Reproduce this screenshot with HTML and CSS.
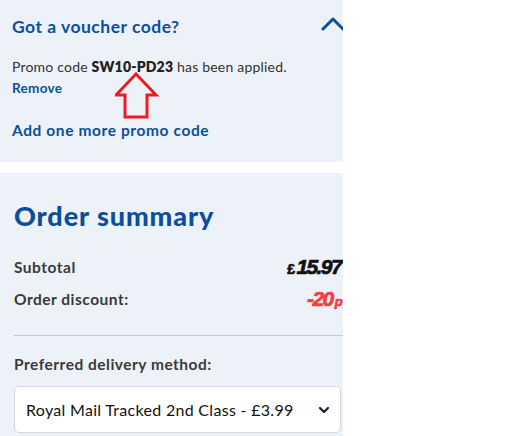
FILE: index.html
```html
<!DOCTYPE html>
<html lang="en">
<head>
<meta charset="UTF-8" />
<meta name="viewport" content="width=device-width, initial-scale=1" />
<title>Basket</title>
<link rel="stylesheet" href="styles.css">
</head>
<body>

<div class="sidebar">
  <div class="panel voucher">
    <div class="voucher-head">
      <h2>Got a voucher code?</h2>
      <svg class="chev-up" width="24" height="14" viewBox="0 0 24 14">
        <polyline points="2,12 12,2 22,12" fill="none" stroke="#0b4f9c" stroke-width="3" stroke-linecap="round" stroke-linejoin="round" />
      </svg>
    </div>
    <p class="applied">Promo code <b>SW10-PD23</b> has been applied.</p>
    <a class="remove" href="#">Remove</a>
    <a class="add-more" href="#">Add one more promo code</a>

    <svg class="pointer" width="48" height="50" viewBox="0 0 48 50">
      <polygon points="21,2 41,23 32,23 32,45 10,45 10,23 1,23" fill="none" stroke="#ed1c24" stroke-width="3" stroke-linejoin="miter" />
    </svg>
  </div>

  <div class="panel summary">
    <h1>Order summary</h1>
    <div class="row">
      <span class="label">Subtotal</span>
      <span class="price"><small>£</small>15.97</span>
    </div>
    <div class="row">
      <span class="label">Order discount:</span>
      <span class="price discount">-20<small>p</small></span>
    </div>
    <hr />
    <div class="label delivery-label">Preferred delivery method:</div>
    <div class="select">
      <span>Royal Mail Tracked 2nd Class - £3.99</span>
      <svg width="12" height="8" viewBox="0 0 12 8">
        <polyline points="2,2 6,6 10,2" fill="none" stroke="#14213d" stroke-width="2.2" stroke-linecap="round" stroke-linejoin="round" />
      </svg>
    </div>
  </div>
</div>

</body>
</html>
```

FILE: styles.css
```css
body {
  margin: 0;
  background: #fff;
  font-family: Lato, "Noto Sans", sans-serif;
  color: #333;
}
.sidebar {
  width: 343px;
}
.panel {
  background: #edf2f9;
  overflow: hidden;
}
.voucher {
  position: relative;
  height: 162px;
  padding: 0 0 0 12px;
  box-sizing: border-box;
}
.voucher-head {
  display: flex;
  justify-content: space-between;
  align-items: center;
  height: 52px;
  margin-right: -2px;
}
.voucher-head h2 {
  margin: 0;
  font-size: 17.5px;
  font-weight: 700;
  letter-spacing: 0.5px;
  color: #0b4f9c;
}
.chev-up {
  margin-top: -4px;
}
.applied {
  margin: 6px 0 0;
  font-size: 14px;
  line-height: 18px;
  letter-spacing: 0.2px;
}
.applied b {
  font-weight: 800;
  color: #222;
}
.remove,
.add-more {
  display: block;
  color: #0b4f9c;
  text-decoration: none;
  font-weight: 700;
}
.remove {
  font-size: 13.5px;
  letter-spacing: 0.3px;
  margin-top: 4px;
}
.add-more {
  font-size: 15.5px;
  letter-spacing: 0.6px;
  margin-top: 25px;
}
.pointer {
  position: absolute;
  left: 115px;
  top: 72px;
}
.summary {
  margin-top: 11px;
  padding: 26px 0 0 14px;
  height: 263px;
  box-sizing: border-box;
}
.summary h1 {
  margin: 0 0 19px;
  font-size: 27px;
  font-weight: 900;
  letter-spacing: 0.9px;
  color: #0b4f9c;
}
.row {
  display: flex;
  justify-content: space-between;
  align-items: center;
  height: 32px;
  padding-right: 2px;
}
.label {
  font-size: 15.5px;
  font-weight: 700;
  letter-spacing: 0.5px;
  color: #3a3a3a;
}
.price {
  font-family: "Liberation Sans Narrow", "Liberation Sans", sans-serif;
  font-weight: 700;
  font-style: italic;
  font-size: 21px;
  letter-spacing: -1.6px;
  color: #111;
  -webkit-text-stroke: 0.7px currentColor;
}
.price small {
  font-size: 14px;
  margin-right: 3px;
  font-style: normal;
}
.discount {
  color: #f2403f;
}
.discount small {
  font-size: 13px;
  font-style: italic;
  margin: 0 0 0 2px;
}
.summary hr {
  border: none;
  border-top: 1px solid #c4c7cc;
  margin: 20px 0 19px;
}
.delivery-label {
  margin-bottom: 13px;
}
.select {
  display: flex;
  justify-content: space-between;
  align-items: center;
  width: 327px;
  height: 47px;
  box-sizing: border-box;
  padding: 0 10px 0 11px;
  background: #fff;
  border: 1px solid #d4d7dc;
  border-radius: 5px;
  font-size: 16px;
  letter-spacing: 0.3px;
  color: #111;
}
```
